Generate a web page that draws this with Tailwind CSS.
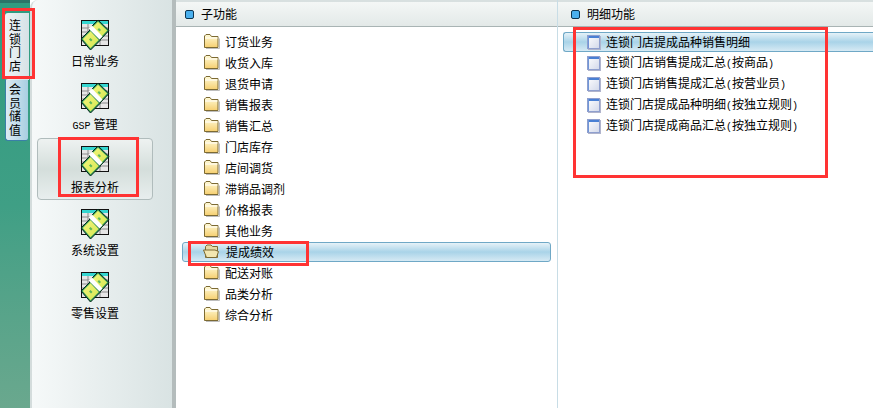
<!DOCTYPE html>
<html lang="zh-CN">
<head>
<meta charset="utf-8">
<title>连锁门店</title>
<script src="https://cdn.jsdelivr.net/npm/@tailwindcss/browser@4"></script>
</head>
<body class="w-[873px] h-[408px] overflow-hidden bg-white text-[12px] leading-[14px] text-black font-['Noto_Sans_CJK_SC','Noto_Sans',sans-serif]">

<!-- shared icons -->
<svg class="absolute w-0 h-0" width="0" height="0">
  <defs>
    <linearGradient id="fold" x1="0" y1="0" x2="0" y2="1"><stop offset="0" stop-color="#fffbd8"/><stop offset="1" stop-color="#f6cf70"/></linearGradient>
    <linearGradient id="bill" x1="0" y1="0" x2="1" y2="1"><stop offset="0" stop-color="#f4f47c"/><stop offset="1" stop-color="#d4e852"/></linearGradient>
    <linearGradient id="page" x1="0" y1="0" x2="1" y2="1"><stop offset="0" stop-color="#ffffff"/><stop offset="1" stop-color="#d2d8ea"/></linearGradient>
  </defs>
  <symbol id="sheet" viewBox="0 0 30 32">
    <rect x="1.500" y="1.500" width="27" height="25" fill="#e6e6e6" stroke="#111"/>
    <rect x="2" y="2" width="26" height="3" fill="#35d6d0"/>
    <path d="M2 9h26M2 13h26M2 17h26M2 21h26M8 5v21M14 5v21M20 5v21" stroke="#8a8a8a" stroke-width="1"/>
    <path d="M18 1 29 11.500 20 21 9 10Z" fill="#2f9a58" stroke="#06281a"/>
    <path d="M18 2.800 27.200 11.500 20 19.200 10.800 10Z" fill="url(#bill)"/>
    <path d="M19 9 21 11 19.500 12.500 17.500 10.500Z" fill="#5cb85c"/>
    <path d="M1 20 10.500 10.500 20.500 21 10.500 31Z" fill="#2f9a58" stroke="#06281a"/>
    <path d="M2.800 20 10.500 12.300 18.700 21 10.500 29.200Z" fill="url(#bill)"/>
    <path d="M10.500 19 12.500 21 11 22.500 9 20.500Z" fill="#5cb85c"/>
    <path d="M8.500 9.500 12 6.500 22.500 17.500 19.500 20.500Z" fill="#fff"/>
  </symbol>
  <symbol id="folder" viewBox="0 0 16 15">
    <path d="M2 14.500h13.500V4.500" fill="none" stroke="#bdbdbd"/>
    <path d="M.5 13.500V2L2 .5h4L7.500 2.500h6.500v11Z" fill="url(#fold)" stroke="#7c6a33"/>
    <path d="M1 4h12.500" stroke="#fff"/>
  </symbol>
  <symbol id="folder-open" viewBox="0 0 18 15">
    <path d="M2.500 13.500V2.500L4 1h4l1.500 1.500h5v11Z" fill="#e6d9a6" stroke="#7c6a33"/>
    <path d="M.5 6H12l3.500 1.500-2 6H3.500Z" fill="#f2e6b0" stroke="#7c6a33"/>
  </symbol>
  <symbol id="doc" viewBox="0 0 14 15">
    <rect x="1" y="1" width="13" height="14" fill="#b0b4cc"/>
    <rect x=".5" y=".5" width="12" height="13" fill="url(#page)" stroke="#8f9fce"/>
    <path d="M1 1.500h11M1 2.500h11" stroke="#4a80d4"/>
    <path d="M1.500 1v12" stroke="#6f96d8"/>
  </symbol>
</svg>

<div class="relative flex w-full h-full">
  <!-- green backdrop and tabs -->
  <div class="w-[30px] shrink-0 h-full bg-gradient-to-b from-[#2f9b80] via-[#3f9f85] to-[#6aa88e] border-t-[3px] border-[#2a7468] pt-[10px] pl-[5px]">
    <div class="w-[24px] h-[67px] rounded-l-[3px] bg-gradient-to-r from-[#eef3f5] to-[#d6e2e6] pt-[5px] pl-[4px] leading-[13.500px]">
      <p class="w-[13px]">连锁门店</p>
    </div>
    <div class="w-[23px] h-[61px] rounded-b-[3px] border-l border-b border-[#3a7fa8] bg-gradient-to-r from-[#dcebf3] to-[#a8cfe2] pt-[2px] pl-[3px] leading-[13.500px]">
      <p class="w-[13px]">会员储值</p>
    </div>
  </div>

  <!-- module column -->
  <div class="w-[146px] shrink-0 h-full rounded-tl-[8px] border-l-2 border-[#d4dcdc] border-r-[4px] border-r-[#b4bcbc] bg-gradient-to-r from-[#f6f9f9] to-[#d9e3e3] flex flex-col items-center pt-[19px] pr-[14px]">
    <div class="flex flex-col items-center h-[63px] w-[116px]">
      <svg class="w-[30px] h-[32px] mb-[3px]"><use href="#sheet"/></svg><span>日常业务</span>
    </div>
    <div class="flex flex-col items-center h-[56px] w-[116px]">
      <svg class="w-[30px] h-[32px] mb-[3px]"><use href="#sheet"/></svg><span><span class="font-['Liberation_Mono'] text-[10px] mr-[3px]">GSP</span>管理</span>
    </div>
    <div class="flex flex-col items-center h-[62px] w-[116px] pt-[6px] rounded-[4px] border border-[#b0bcbc] bg-gradient-to-b from-[#eef2f1] via-[#d4dedb] to-[#e8eeee]">
      <svg class="w-[30px] h-[32px] mb-[3px]"><use href="#sheet"/></svg><span>报表分析</span>
    </div>
    <div class="flex flex-col items-center h-[63px] w-[116px] pt-[8px]">
      <svg class="w-[30px] h-[32px] mb-[3px]"><use href="#sheet"/></svg><span>系统设置</span>
    </div>
    <div class="flex flex-col items-center h-[63px] w-[116px] pt-[8px]">
      <svg class="w-[30px] h-[32px] mb-[3px]"><use href="#sheet"/></svg><span>零售设置</span>
    </div>
  </div>

  <!-- sub functions -->
  <div class="w-[382px] shrink-0 h-full border-r border-[#c8dde6]">
    <div class="h-[27px] flex items-center gap-[7px] pl-[9px] border-t-2 border-[#d8e0e0] border-b border-b-[#a9b4b4] bg-gradient-to-b from-[#f4f7f6] to-[#e3e9e8]">
      <span class="w-[9px] h-[9px] rounded-[2px] border border-[#0d3550] bg-[#4ab0ee]"></span><span>子功能</span>
    </div>
    <div class="flex flex-col pt-[4px] px-[6px]">
      <div class="h-[21px] flex items-center pl-[22px] gap-[5px]"><svg class="w-[16px] h-[15px]"><use href="#folder"/></svg>订货业务</div>
      <div class="h-[21px] flex items-center pl-[22px] gap-[5px]"><svg class="w-[16px] h-[15px]"><use href="#folder"/></svg>收货入库</div>
      <div class="h-[21px] flex items-center pl-[22px] gap-[5px]"><svg class="w-[16px] h-[15px]"><use href="#folder"/></svg>退货申请</div>
      <div class="h-[21px] flex items-center pl-[22px] gap-[5px]"><svg class="w-[16px] h-[15px]"><use href="#folder"/></svg>销售报表</div>
      <div class="h-[21px] flex items-center pl-[22px] gap-[5px]"><svg class="w-[16px] h-[15px]"><use href="#folder"/></svg>销售汇总</div>
      <div class="h-[21px] flex items-center pl-[22px] gap-[5px]"><svg class="w-[16px] h-[15px]"><use href="#folder"/></svg>门店库存</div>
      <div class="h-[21px] flex items-center pl-[22px] gap-[5px]"><svg class="w-[16px] h-[15px]"><use href="#folder"/></svg>店间调货</div>
      <div class="h-[21px] flex items-center pl-[22px] gap-[5px]"><svg class="w-[16px] h-[15px]"><use href="#folder"/></svg>滞销品调剂</div>
      <div class="h-[21px] flex items-center pl-[22px] gap-[5px]"><svg class="w-[16px] h-[15px]"><use href="#folder"/></svg>价格报表</div>
      <div class="h-[21px] flex items-center pl-[22px] gap-[5px]"><svg class="w-[16px] h-[15px]"><use href="#folder"/></svg>其他业务</div>
      <div class="h-[20px] my-[0.5px] w-[369px] flex items-center pl-[20px] gap-[5px] rounded-[3px] border border-[#6fa8c6] bg-gradient-to-b from-[#e6f2f8] via-[#a9d3e8] to-[#d6eaf4]"><svg class="w-[18px] h-[15px]"><use href="#folder-open"/></svg>提成绩效</div>
      <div class="h-[21px] flex items-center pl-[22px] gap-[5px]"><svg class="w-[16px] h-[15px]"><use href="#folder"/></svg>配送对账</div>
      <div class="h-[21px] flex items-center pl-[22px] gap-[5px]"><svg class="w-[16px] h-[15px]"><use href="#folder"/></svg>品类分析</div>
      <div class="h-[21px] flex items-center pl-[22px] gap-[5px]"><svg class="w-[16px] h-[15px]"><use href="#folder"/></svg>综合分析</div>
    </div>
  </div>

  <!-- detail functions -->
  <div class="flex-1 h-full">
    <div class="h-[27px] flex items-center gap-[7px] pl-[13px] border-t-2 border-[#d8e0e0] border-b border-b-[#a9b4b4] bg-gradient-to-b from-[#f4f7f6] to-[#e3e9e8]">
      <span class="w-[9px] h-[9px] rounded-[2px] border border-[#0d3550] bg-[#4ab0ee]"></span><span>明细功能</span>
    </div>
    <div class="flex flex-col pt-[5px] pl-[5px]">
      <div class="h-[20px] mb-[1px] flex items-center pl-[23px] gap-[5px] rounded-l-[3px] border border-r-0 border-[#6fa8c6] bg-gradient-to-b from-[#e6f2f8] via-[#a9d3e8] to-[#d6eaf4]"><svg class="w-[14px] h-[15px]"><use href="#doc"/></svg>连锁门店提成品种销售明细</div>
      <div class="h-[21px] flex items-center pl-[24px] gap-[5px]"><svg class="w-[14px] h-[15px]"><use href="#doc"/></svg><span>连锁门店销售提成汇总<span class="font-['Liberation_Mono'] text-[10px]">(</span>按商品<span class="font-['Liberation_Mono'] text-[10px]">)</span></span></div>
      <div class="h-[21px] flex items-center pl-[24px] gap-[5px]"><svg class="w-[14px] h-[15px]"><use href="#doc"/></svg><span>连锁门店销售提成汇总<span class="font-['Liberation_Mono'] text-[10px]">(</span>按营业员<span class="font-['Liberation_Mono'] text-[10px]">)</span></span></div>
      <div class="h-[21px] flex items-center pl-[24px] gap-[5px]"><svg class="w-[14px] h-[15px]"><use href="#doc"/></svg><span>连锁门店提成品种明细<span class="font-['Liberation_Mono'] text-[10px]">(</span>按独立规则<span class="font-['Liberation_Mono'] text-[10px]">)</span></span></div>
      <div class="h-[21px] flex items-center pl-[24px] gap-[5px]"><svg class="w-[14px] h-[15px]"><use href="#doc"/></svg><span>连锁门店提成商品汇总<span class="font-['Liberation_Mono'] text-[10px]">(</span>按独立规则<span class="font-['Liberation_Mono'] text-[10px]">)</span></span></div>
    </div>
  </div>

  <!-- red annotation boxes drawn over the screenshot -->
  <div class="absolute left-[2px] top-[8px] w-[33px] h-[71px] border-[3px] border-[#ff3333]"></div>
  <div class="absolute left-[58px] top-[137px] w-[81px] h-[60px] border-[3px] border-[#ff3333]"></div>
  <div class="absolute left-[188px] top-[241px] w-[121px] h-[25px] border-[3px] border-[#ff3333]"></div>
  <div class="absolute left-[573px] top-[27px] w-[255px] h-[151px] border-[3px] border-[#ff3333]"></div>
</div>
</body>
</html>
